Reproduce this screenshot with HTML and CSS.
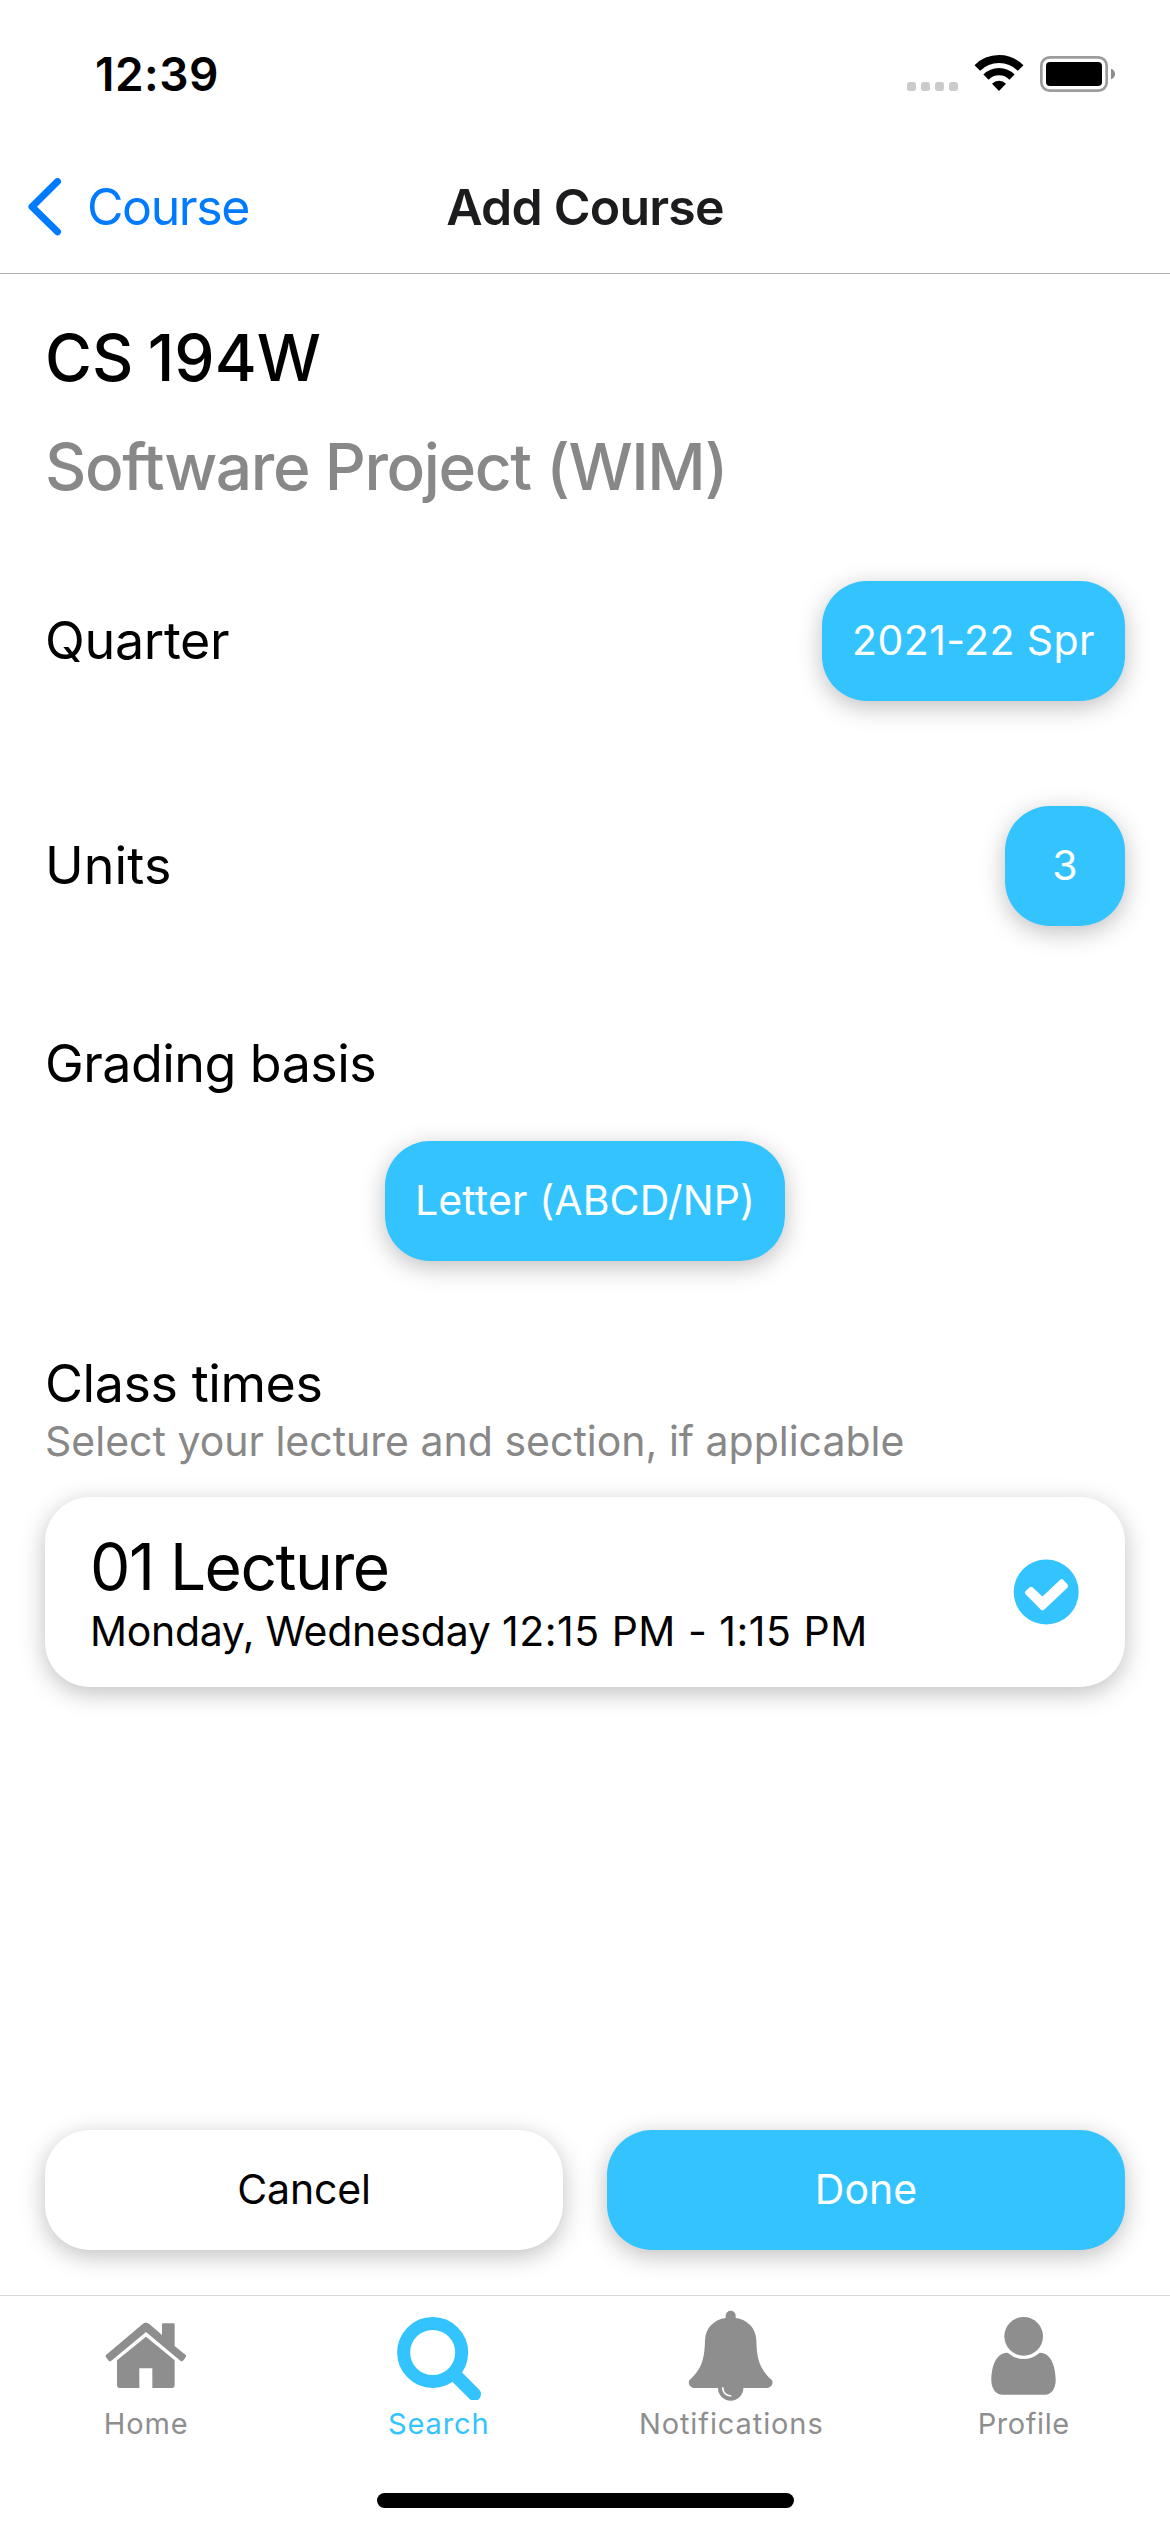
FILE: index.html
```html
<!DOCTYPE html>
<html lang="en">
<head>
<meta charset="utf-8">
<title>Add Course</title>
<link rel="stylesheet" href="styles.css">
</head>
<body>
<div class="screen">
  <div class="status">
    <span class="time">12:39</span>
    <svg class="status-icons" width="208" height="37" viewBox="51 45 624 111">
      <g fill="#cbcbcb">
        <rect x="51" y="126" width="27" height="27" rx="8"/>
        <rect x="93" y="126" width="27" height="27" rx="8"/>
        <rect x="135" y="126" width="27" height="27" rx="8"/>
        <rect x="177" y="126" width="27" height="27" rx="8"/>
      </g>
      <g fill="none" stroke="#000">
        <path d="M262 84 A92 92 0 0 1 392 84" stroke-width="24"/>
        <path d="M288 111.500 A54.500 54.500 0 0 1 366 111.500" stroke-width="22"/>
      </g>
      <path d="M306 131 A29 29 0 0 1 348 131 L327 153 Z" fill="#000"/>
      <rect x="454" y="52" width="196" height="100" rx="25" fill="none" stroke="#9c9c9c" stroke-width="8"/>
      <rect x="468" y="66" width="168" height="72" rx="12" fill="#000"/>
      <path d="M663 86 Q675 90 675 102 Q675 114 663 118 Z" fill="#8c8c8c"/>
    </svg>
  </div>
  <header class="nav">
    <div class="back">
      <svg width="34" height="58" viewBox="28 178 34 58"><path d="M57.500 181.500 L32 206.700 L57.500 231.800" fill="none" stroke="#007aff" stroke-width="7" stroke-linecap="round" stroke-linejoin="round"/></svg>
      <span class="back-label">Course</span>
    </div>
    <h1 class="nav-title">Add Course</h1>
  </header>
  <main class="content">
    <h2 class="course-code">CS 194W</h2>
    <p class="course-name">Software Project (WIM)</p>
    <section class="row quarter">
      <span class="label label-quarter">Quarter</span>
      <button class="btn blue btn-quarter">2021-22 Spr</button>
    </section>
    <section class="row units">
      <span class="label label-units">Units</span>
      <button class="btn blue btn-units">3</button>
    </section>
    <h3 class="label grading">Grading basis</h3>
    <button class="btn blue btn-grading">Letter (ABCD/NP)</button>
    <h3 class="label times">Class times</h3>
    <p class="hint">Select your lecture and section, if applicable</p>
    <article class="card">
      <div class="card-text">
        <span class="lecture">01 Lecture</span>
        <span class="when"><span class="days">Monday, Wednesday</span> <span class="hours">12:15 PM - 1:15 PM</span></span>
      </div>
      <svg width="66" height="66" viewBox="1013 1559 66 66">
        <circle cx="1046.200" cy="1592" r="32.500" fill="#33c4ff"/>
        <path d="M1031 1589 L1042.400 1599.600 L1061.800 1581.500 L1065.800 1586 L1042.600 1608.200 L1027.200 1592.700 Z" fill="#fff" stroke="#fff" stroke-width="4.500" stroke-linejoin="round"/>
      </svg>
    </article>
    <div class="actions">
      <button class="btn white">Cancel</button>
      <button class="btn blue">Done</button>
    </div>
  </main>
  <nav class="tabs">
    <a class="tab">
      <svg width="100" height="100" viewBox="18 30 300 300" fill="currentColor">
        <path d="M48 195 L158 102 Q168 95 178 102 L216 135 V104 Q216 100 220 100 H250 Q254 100 254 104 V168 L287 195 Q290 198 287 202 L279 212 Q275 215 271 212 L168 126 L64 212 Q60 215 56 212 L48 202 Q45 198 48 195 Z"/>
        <path d="M81 211 L168 140 L254 211 V285 Q254 294 245 294 H187 V235 H148 V294 H90 Q81 294 81 285 Z"/>
      </svg>
      <span>Home</span>
    </a>
    <a class="tab active">
      <svg width="100" height="100" viewBox="896 30 300 300" fill="none" stroke="currentColor">
        <circle cx="1027" cy="187.500" r="87" stroke-width="39"/>
        <path d="M1092 253 L1152 313" stroke-width="40" stroke-linecap="round"/>
      </svg>
      <span>Search</span>
    </a>
    <a class="tab">
      <svg class="bell" width="100" height="102" viewBox="4 30 300 306" fill="currentColor">
        <path d="M138 84 V77 A15 15 0 0 1 168 77 V84 C202 88 229 114 230 150 C231 215 244 240 277 271 C282 281 274 294 261 294 H191 A38 38 0 0 1 115 294 H45 C32 294 24 281 29 271 C62 240 75 215 76 150 C77 114 104 88 138 84 Z"/>
        <path d="M129 292 Q130 317 155 318" fill="none" stroke="#fff" stroke-width="5"/>
      </svg>
      <span>Notifications</span>
    </a>
    <a class="tab">
      <svg width="100" height="100" viewBox="881 30 300 300" fill="currentColor">
        <circle cx="1030" cy="139" r="58"/>
        <path d="M980 188 Q984 188 986 191 Q1005 207 1030 207 Q1055 207 1074 191 Q1076 188 1080 188 C1112 190 1125 228 1126 268 C1127 297 1112 314 1094 314 H966 C948 314 932 297 933 268 C934 228 947 190 980 188 Z"/>
      </svg>
      <span class="tab-profile">Profile</span>
    </a>
  </nav>
  <div class="home-bar"></div>
</div>
</body>
</html>
```
FILE: styles.css
```css
* {
  box-sizing: border-box;
}

body {
  margin: 0;
  background: #fff;
  color: #000;
  font-family: Inter, "Liberation Sans", sans-serif;
}

h1, h2, h3, p {
  margin: 0;
  font-weight: 400;
}

svg {
  display: block;
}

.screen {
  display: flex;
  flex-direction: column;
  width: 1170px;
  height: 2532px;
  overflow: hidden;
  white-space: nowrap;
}

/* Status bar */
.status {
  display: flex;
  justify-content: space-between;
  align-items: flex-start;
  height: 141px;
  padding: 50px 55px 0 95px;
}

.time {
  font-size: 46px;
  font-weight: 600;
  line-height: 48px;
  letter-spacing: 0.5px;
}

.status-icons {
  margin-top: 5px;
}

/* Navigation header */
.nav {
  display: grid;
  grid-template-columns: 1fr auto 1fr;
  align-items: center;
  height: 133px;
  border-bottom: 1px solid #b2b2b2;
}

.back {
  display: flex;
  align-items: center;
  gap: 25px;
  padding-left: 28px;
  color: #007aff;
}

.back-label {
  font-size: 50px;
  letter-spacing: -1.4px;
}

.nav-title {
  color: #1c1c1e;
  font-size: 50px;
  font-weight: 600;
  letter-spacing: -0.8px;
}

/* Form */
.content {
  display: flex;
  flex: 1;
  flex-direction: column;
  padding: 45px 45px;
}

.course-code,
.course-name {
  font-size: 64px;
  font-weight: 500;
  line-height: 78px;
}

.course-code {
  letter-spacing: 0.1px;
  word-spacing: -3px;
}

.course-name {
  margin-top: 31px;
  color: #888;
  letter-spacing: -1.4px;
}

.row {
  display: flex;
  justify-content: space-between;
  align-items: center;
}

.quarter {
  margin-top: 75px;
}

.units {
  margin-top: 105px;
}

.label {
  font-size: 52px;
  line-height: 64px;
}

.label-quarter {
  letter-spacing: -0.3px;
}

.label-units {
  letter-spacing: 0.1px;
}

.grading {
  margin-top: 106px;
  letter-spacing: -0.55px;
}

.times {
  margin-top: 91px;
  letter-spacing: -0.43px;
}

.hint {
  color: #888;
  font-size: 41px;
  line-height: 50px;
}

.btn {
  height: 120px;
  padding: 0 0 2px;
  border: 0;
  border-radius: 45px;
  box-shadow: 0 6px 24px rgba(0, 0, 0, 0.25);
  font-family: inherit;
  font-size: 41px;
}

.blue {
  background: #33c4ff;
  color: #fff;
}

.white {
  background: #fff;
  color: #000;
  letter-spacing: -0.2px;
}

.btn-quarter {
  width: 303px;
  letter-spacing: 0.4px;
}

.btn-units {
  width: 120px;
}

.btn-grading {
  align-self: center;
  width: 400px;
  margin-top: 45px;
  letter-spacing: 0.13px;
}

.card {
  display: flex;
  justify-content: space-between;
  align-items: center;
  height: 190px;
  margin-top: 31px;
  padding: 0 46px 0 45px;
  border-radius: 45px;
  background: #fff;
  box-shadow: 0 6px 24px rgba(0, 0, 0, 0.25);
}

.card-text {
  display: flex;
  flex-direction: column;
}

.lecture {
  font-size: 64px;
  line-height: 78px;
  letter-spacing: -1.5px;
}

.when {
  font-size: 41px;
  line-height: 50px;
}

.days {
  letter-spacing: -0.3px;
}

.hours {
  letter-spacing: 0.5px;
}

.actions {
  display: grid;
  grid-template-columns: 1fr 1fr;
  gap: 44px;
  margin-top: auto;
}

/* Tab bar */
.tabs {
  display: grid;
  grid-template-columns: repeat(4, 1fr);
  height: 198px;
  border-top: 1px solid #d8d8d8;
}

.tab {
  display: flex;
  flex-direction: column;
  align-items: center;
  gap: 5px;
  padding-top: 4px;
  color: #8e8e8f;
  font-size: 29px;
  line-height: 37px;
  letter-spacing: 0.9px;
}

.active {
  color: #33c4ff;
}

.tab-profile {
  letter-spacing: 0.6px;
}

.bell {
  margin-bottom: -2px;
}

.home-bar {
  align-self: center;
  width: 417px;
  height: 15px;
  margin-bottom: 24px;
  border-radius: 8px;
  background: #000;
}
```
